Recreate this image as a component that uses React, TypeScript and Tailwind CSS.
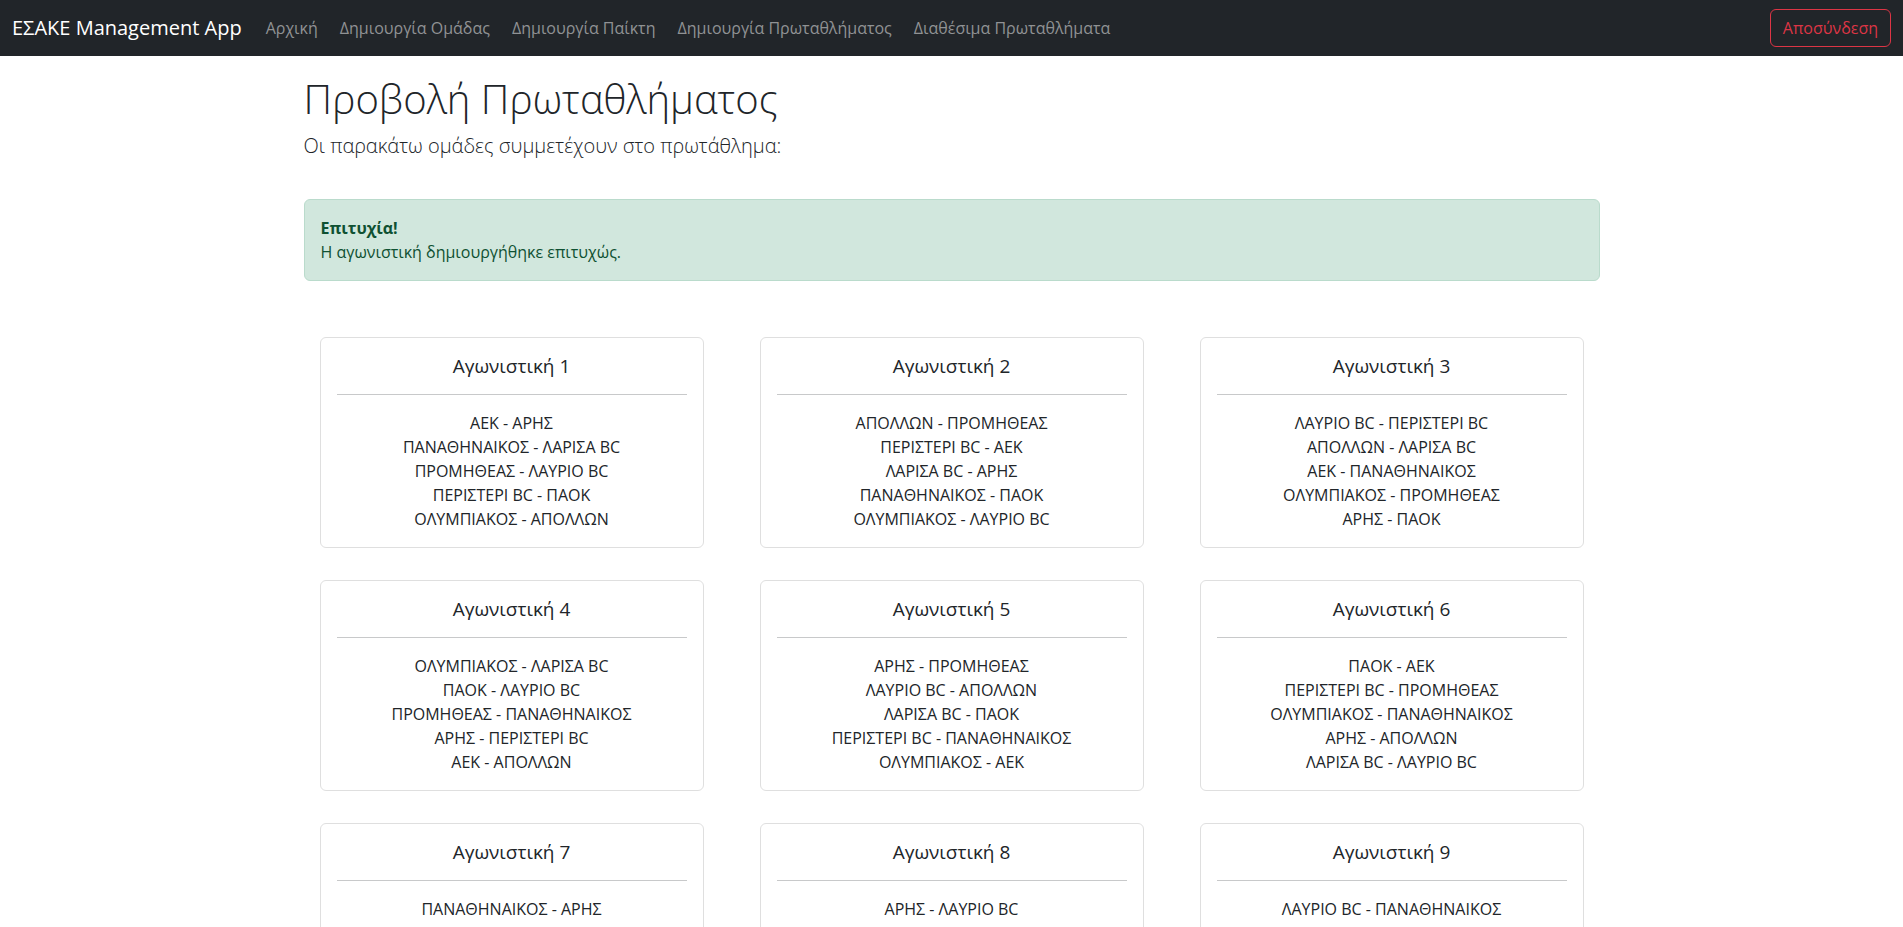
const links = [
  "Αρχική",
  "Δημιουργία Ομάδας",
  "Δημιουργία Παίκτη",
  "Δημιουργία Πρωταθλήματος",
  "Διαθέσιμα Πρωταθλήματα",
];

const rounds: string[][] = [
  ["ΑΕΚ - ΑΡΗΣ", "ΠΑΝΑΘΗΝΑΙΚΟΣ - ΛΑΡΙΣΑ BC", "ΠΡΟΜΗΘΕΑΣ - ΛΑΥΡΙΟ BC", "ΠΕΡΙΣΤΕΡΙ BC - ΠΑΟΚ", "ΟΛΥΜΠΙΑΚΟΣ - ΑΠΟΛΛΩΝ"],
  ["ΑΠΟΛΛΩΝ - ΠΡΟΜΗΘΕΑΣ", "ΠΕΡΙΣΤΕΡΙ BC - ΑΕΚ", "ΛΑΡΙΣΑ BC - ΑΡΗΣ", "ΠΑΝΑΘΗΝΑΙΚΟΣ - ΠΑΟΚ", "ΟΛΥΜΠΙΑΚΟΣ - ΛΑΥΡΙΟ BC"],
  ["ΛΑΥΡΙΟ BC - ΠΕΡΙΣΤΕΡΙ BC", "ΑΠΟΛΛΩΝ - ΛΑΡΙΣΑ BC", "ΑΕΚ - ΠΑΝΑΘΗΝΑΙΚΟΣ", "ΟΛΥΜΠΙΑΚΟΣ - ΠΡΟΜΗΘΕΑΣ", "ΑΡΗΣ - ΠΑΟΚ"],
  ["ΟΛΥΜΠΙΑΚΟΣ - ΛΑΡΙΣΑ BC", "ΠΑΟΚ - ΛΑΥΡΙΟ BC", "ΠΡΟΜΗΘΕΑΣ - ΠΑΝΑΘΗΝΑΙΚΟΣ", "ΑΡΗΣ - ΠΕΡΙΣΤΕΡΙ BC", "ΑΕΚ - ΑΠΟΛΛΩΝ"],
  ["ΑΡΗΣ - ΠΡΟΜΗΘΕΑΣ", "ΛΑΥΡΙΟ BC - ΑΠΟΛΛΩΝ", "ΛΑΡΙΣΑ BC - ΠΑΟΚ", "ΠΕΡΙΣΤΕΡΙ BC - ΠΑΝΑΘΗΝΑΙΚΟΣ", "ΟΛΥΜΠΙΑΚΟΣ - ΑΕΚ"],
  ["ΠΑΟΚ - ΑΕΚ", "ΠΕΡΙΣΤΕΡΙ BC - ΠΡΟΜΗΘΕΑΣ", "ΟΛΥΜΠΙΑΚΟΣ - ΠΑΝΑΘΗΝΑΙΚΟΣ", "ΑΡΗΣ - ΑΠΟΛΛΩΝ", "ΛΑΡΙΣΑ BC - ΛΑΥΡΙΟ BC"],
  ["ΠΑΝΑΘΗΝΑΙΚΟΣ - ΑΡΗΣ", "ΑΕΚ - ΛΑΥΡΙΟ BC", "ΛΑΡΙΣΑ BC - ΠΡΟΜΗΘΕΑΣ", "ΟΛΥΜΠΙΑΚΟΣ - ΠΕΡΙΣΤΕΡΙ BC", "ΑΠΟΛΛΩΝ - ΠΑΟΚ"],
  ["ΑΡΗΣ - ΛΑΥΡΙΟ BC", "ΠΑΝΑΘΗΝΑΙΚΟΣ - ΑΠΟΛΛΩΝ", "ΑΕΚ - ΠΡΟΜΗΘΕΑΣ", "ΠΕΡΙΣΤΕΡΙ BC - ΛΑΡΙΣΑ BC", "ΟΛΥΜΠΙΑΚΟΣ - ΠΑΟΚ"],
  ["ΛΑΥΡΙΟ BC - ΠΑΝΑΘΗΝΑΙΚΟΣ", "ΑΕΚ - ΛΑΡΙΣΑ BC", "ΟΛΥΜΠΙΑΚΟΣ - ΑΡΗΣ", "ΠΡΟΜΗΘΕΑΣ - ΠΑΟΚ", "ΠΕΡΙΣΤΕΡΙ BC - ΑΠΟΛΛΩΝ"],
];

function RoundCard({ index, matches }: { index: number; matches: string[] }) {
  return (
    <div className="m-4 rounded-md border border-[#dfdfdf] bg-white p-4 text-center">
      <h5 className="text-[19px] leading-[24px] font-normal">Αγωνιστική {index}</h5>
      <hr className="my-4 border-t border-[#c8c9ca]" />
      <div className="text-base leading-6">
        {matches.map((m) => (
          <p key={m}>{m}</p>
        ))}
      </div>
    </div>
  );
}

export default function App() {
  return (
    <div className="min-h-screen bg-white font-['Open_Sans','Noto_Sans',sans-serif] text-[#212529]">
      <nav className="flex h-14 items-center justify-between bg-[#212529] px-3">
        <div className="flex items-center">
          <a className="mr-[13px] py-[5px] text-xl leading-[30px] text-white">ΕΣΑΚΕ Management App</a>
          <ul className="flex">
            {links.map((l) => (
              <li key={l}>
                <a className="block px-[11px] py-2 text-base leading-6 text-[#909294]">{l}</a>
              </li>
            ))}
          </ul>
        </div>
        <button className="rounded-md border border-[#dc3545] px-3 py-1.5 text-base leading-6 text-[#dc3545]">
          Αποσύνδεση
        </button>
      </nav>

      <main className="mx-auto max-w-[1320px] px-3">
        <h1 className="mt-[19px] text-[40px] leading-[1.2] font-light">Προβολή Πρωταθλήματος</h1>
        <p className="mt-2 text-xl leading-[30px] font-light">Οι παρακάτω ομάδες συμμετέχουν στο πρωτάθλημα:</p>

        <div className="mt-[38px] rounded-md border border-[#badbcc] bg-[#d1e7dd] p-4 text-base leading-6 text-[#0f5132]">
          <strong className="font-bold">Επιτυχία!</strong>
          <br />
          Η αγωνιστική δημιουργήθηκε επιτυχώς.
        </div>

        <div className="mt-10 grid grid-cols-3 gap-x-6">
          {rounds.map((r, i) => (
            <RoundCard key={i} index={i + 1} matches={r} />
          ))}
        </div>
      </main>
    </div>
  );
}
